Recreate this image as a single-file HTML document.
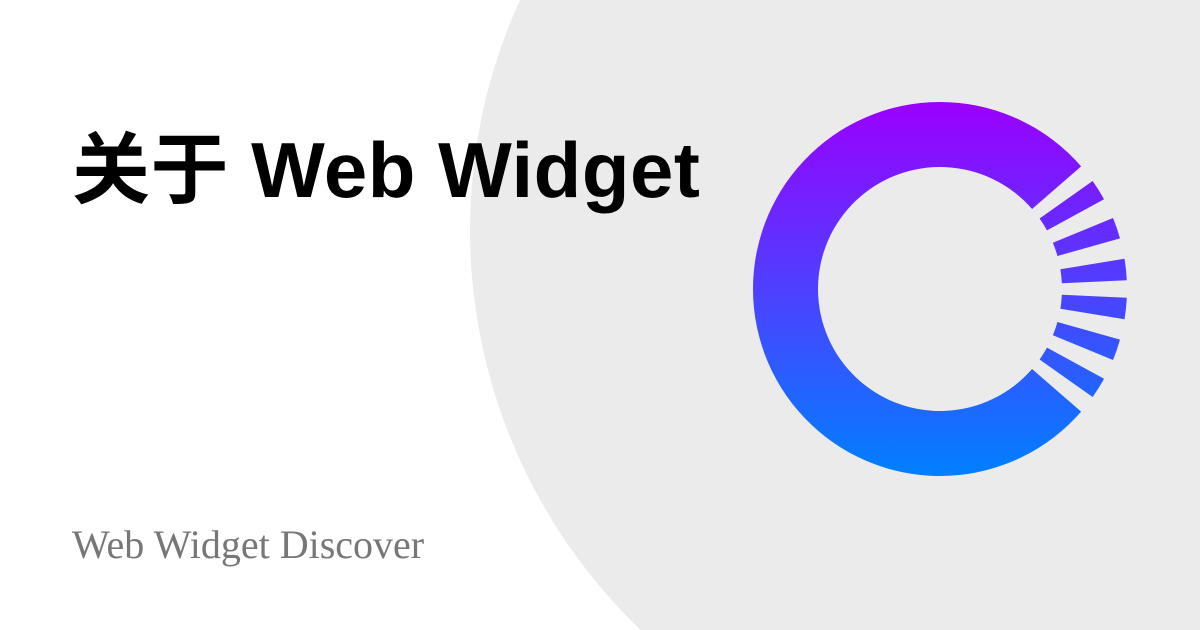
<!DOCTYPE html>
<html><head><meta charset="utf-8"><style>
html,body{margin:0;padding:0;width:1200px;height:630px;overflow:hidden}
body{background:#fff}
.wrap{position:relative;width:1200px;height:630px;overflow:hidden}
h1{position:absolute;left:72px;top:131px;margin:0;font:bold 78px/1 "Liberation Sans","Noto Sans CJK SC",sans-serif;color:#000;white-space:nowrap;letter-spacing:0.5px}
.ft{position:absolute;left:72px;top:525px;font:40px/1 "Liberation Serif","Noto Serif CJK SC",serif;color:#777;white-space:nowrap}
svg{position:absolute;left:0;top:0;display:block}
</style></head><body>
<div class="wrap">
<svg width="1200" height="630"><defs><linearGradient id="g" gradientUnits="userSpaceOnUse" x1="0" y1="102" x2="0" y2="476"><stop offset="0" stop-color="#9a00ff"/><stop offset="1" stop-color="#0080ff"/></linearGradient></defs>
<circle cx="1024" cy="230" r="554" fill="#ebebeb"/>
<g id="lg" fill="url(#g)"></g></svg>
<h1>关于 Web Widget</h1>
<div class="ft">Web Widget Discover</div>
</div>
<script>
(function(){
var cx=940,cy=289,R=187,r=122,g=document.getElementById('lg');
function pt(rad,a){a=a*Math.PI/180;return (cx+rad*Math.cos(a)).toFixed(2)+' '+(cy+rad*Math.sin(a)).toFixed(2);}
function sec(a1,a2){var large=(a2-a1)>180?1:0;
return 'M'+pt(R,a1)+' A'+R+' '+R+' 0 '+large+' 1 '+pt(R,a2)+' L'+pt(r,a2)+' A'+r+' '+r+' 0 '+large+' 0 '+pt(r,a1)+'Z';}
var d=sec(41,319);
[-32,-19,-6,6,19,32].forEach(function(a){d+=sec(a-3.3,a+3.3);});
var p=document.createElementNS('http://www.w3.org/2000/svg','path');p.setAttribute('d',d);g.appendChild(p);
})();
</script>
</body></html>
